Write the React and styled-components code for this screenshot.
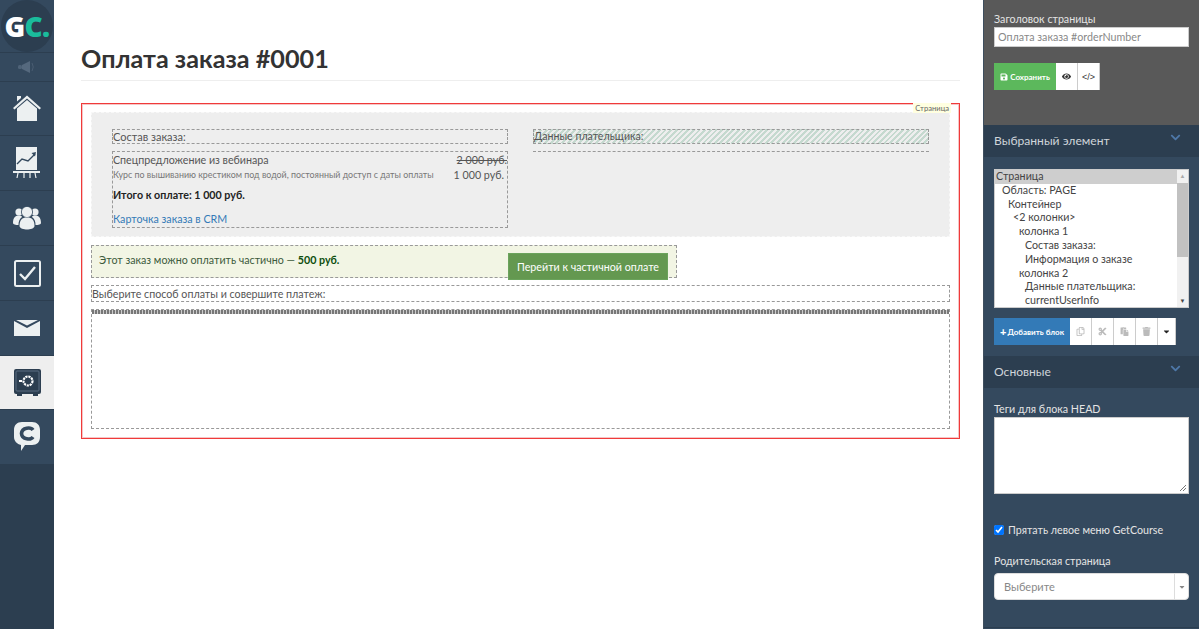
import React from 'react';
import styled, { createGlobalStyle } from 'styled-components';
import { FaEye, FaSave, FaCut, FaPaste, FaTrash, FaRegCopy, FaCaretDown, FaChevronDown } from 'react-icons/fa';

const Global = createGlobalStyle`
  html, body { margin: 0; padding: 0; height: 100%; }
  body { font-family: "Lato", "Liberation Sans", sans-serif; background: #fff; overflow: hidden; }
  * { box-sizing: border-box; }
`;

const Layout = styled.div`
  display: flex;
  width: 1199px;
  height: 629px;
`;

const Sidebar = styled.nav`
  width: 54px;
  flex: none;
  background: #2c3e50;
  display: flex;
  flex-direction: column;
`;

const Logo = styled.div`
  height: 53px;
  background: #34495e;
  border-bottom: 1px solid #2c3e50;
  overflow: hidden;
  display: flex;
  align-items: center;
  justify-content: center;
`;

const LogoCircle = styled.div`
  width: 52px;
  height: 52px;
  flex: none;
  border-radius: 50%;
  background: #2c3e50;
  display: flex;
  align-items: center;
  justify-content: center;
  font-family: "Open Sans", sans-serif;
  font-weight: 800;
  font-size: 28px;
  letter-spacing: -0.6px;
  color: #fff;
  span { color: #1abc9c; }
`;

const Speaker = styled.div`
  height: 29px;
  background: #34495e;
  border-bottom: 1px solid #2c3e50;
  display: flex;
  align-items: center;
  justify-content: center;
`;

const NavItem = styled.div`
  height: ${(p) => p.$h || 55}px;
  background: ${(p) => (p.$active ? '#eeeeee' : '#34495e')};
  border-bottom: 1px solid #2c3e50;
  display: flex;
  align-items: center;
  justify-content: center;
`;

const Main = styled.main`
  flex: 1;
  min-width: 0;
  padding: 43px 23px 0 27px;
`;

const Title = styled.h1`
  margin: 0;
  height: 38px;
  border-bottom: 1px solid #eee;
  font-size: 25.2px;
  line-height: 30px;
  font-weight: 700;
  color: #333;
`;

const PageFrame = styled.div`
  position: relative;
  margin-top: 22px;
  height: 336px;
  border: 1px solid #f03a3a;
  box-shadow: inset 0 0 0 1px #f6c6c6;
  padding: 8px 9px;
  font-size: 10.7px;
  color: #555;
`;

const FrameTag = styled.div`
  position: absolute;
  top: -1px;
  right: 8px;
  height: 10px;
  padding: 0 2px;
  background: #ffffe0;
  color: #666;
  font-size: 7.6px;
  line-height: 11px;
`;

const OrderBand = styled.div`
  background: #eeeeee;
  outline: 1px dashed #f8f8f8;
  outline-offset: -1px;
  height: 125px;
  padding: 17px 21px 0;
  display: flex;
  gap: 25px;
`;

const Col = styled.div`
  width: ${(p) => p.$w}px;
  flex: none;
`;

const Dashed = styled.div`
  border: 1px dashed #999;
`;

const Heading = styled(Dashed)`
  height: 15px;
  line-height: 13px;
  font-size: 11px;
  color: #555;
  margin-bottom: 7px;
`;

const HatchHeading = styled(Heading)`
  font-size: 10.6px;
  background: repeating-linear-gradient(135deg, #c5d9cf 0 2px, #eee 2px 4px);
`;

const OrderInfo = styled(Dashed)`
  height: 77px;
  padding-top: 1px;
`;

const EmptyInfo = styled.div`
  border-top: 1px dashed #999;
`;

const ItemRow = styled.div`
  display: flex;
  justify-content: space-between;
  align-items: center;
  white-space: nowrap;
`;

const ItemName = styled.div`
  line-height: 14px;
  color: #555;
`;

const OldPrice = styled.div`
  line-height: 14px;
  text-decoration: line-through;
  color: #555;
`;

const ItemDesc = styled.div`
  font-size: 8.9px;
  line-height: 15px;
  color: #777;
`;

const NewPrice = styled.div`
  line-height: 15px;
  color: #555;
  padding-right: 3px;
`;

const Total = styled.div`
  font-weight: 700;
  color: #222;
  line-height: 14px;
  margin-top: 6px;
`;

const CrmLink = styled.a`
  display: block;
  line-height: 14px;
  margin-top: 10px;
  color: #337ab7;
`;

const PartialPay = styled(Dashed)`
  margin-top: 8px;
  width: 586px;
  height: 33px;
  background: #f2f5e4;
  display: flex;
  justify-content: space-between;
  padding: 0 8px 0 7px;
  color: #3c5a3c;
`;

const PartialText = styled.div`
  line-height: 27px;
  b { color: #0d4d0d; }
`;

const PartialButton = styled.button`
  margin-top: 7px;
  width: 160px;
  height: 27px;
  flex: none;
  white-space: nowrap;
  padding: 0;
  border: 1px solid #6ba35c;
  background: #649850;
  color: #fff;
  font: inherit;
`;

const MethodTitle = styled(Dashed)`
  margin-top: 7px;
  height: 17px;
  line-height: 15px;
  color: #555;
`;

const WidgetArea = styled(Dashed)`
  margin-top: 7px;
  height: 120px;
`;

const WidgetStrip = styled.div`
  height: 4px;
  background: repeating-linear-gradient(90deg, #777 0 2px, #ccc 2px 3px);
`;

const Panel = styled.aside`
  width: 216px;
  flex: none;
  background: #34495e;
  display: flex;
  flex-direction: column;
  border-left: 1px solid #3e4e5e;
  font-size: 10.7px;
`;

const PanelTop = styled.div`
  background: #595959;
  height: 125px;
  padding: 12px 10px 0;
`;

const Label = styled.div`
  line-height: 14px;
  color: #e4e4e4;
  margin-top: ${(p) => p.$top || 0}px;
  margin-bottom: 1px;
`;

const TextInput = styled.div`
  width: 195px;
  height: 20px;
  background: #fff;
  border: 1px solid #ccc;
  color: #888;
  line-height: 18px;
  padding-left: 3px;
`;

const Toolbar = styled.div`
  display: flex;
  margin-top: ${(p) => p.$top || 0}px;
`;

const ToolMain = styled.button`
  height: 27px;
  width: ${(p) => p.$w}px;
  flex: none;
  border: none;
  padding: 0;
  background: ${(p) => p.$bg};
  color: #fff;
  font: inherit;
  font-size: 8px;
  font-weight: 700;
  white-space: nowrap;
  display: flex;
  align-items: center;
  justify-content: center;
  gap: 1px;
  svg { margin-right: 1px; }
  b { font-size: 11px; }
`;

const ToolButton = styled.button`
  height: 27px;
  width: ${(p) => p.$w || 22}px;
  flex: none;
  border: none;
  border-right: 1px solid #ccc;
  padding: 0;
  background: #fff;
  color: ${(p) => p.$color || '#bbb'};
  font-size: 9px;
  display: flex;
  align-items: center;
  justify-content: center;
`;

const SectionHead = styled.div`
  height: 32px;
  flex: none;
  background: #2c3e50;
  padding: 0 10px 2px;
  display: flex;
  align-items: center;
  justify-content: space-between;
  color: #d0d5da;
  font-size: 12.1px;
  svg { color: #4e78a8; margin-right: 8px; margin-top: -5px; }
`;

const SectionBody = styled.div`
  padding: ${(p) => p.$pad};
  height: ${(p) => p.$h}px;
  flex: none;
`;

const TreeBox = styled.div`
  position: relative;
  width: 195px;
  height: 139px;
  background: #fff;
  border: 1px solid #ccc;
  overflow: hidden;
`;

const TreeRow = styled.div`
  height: 13.8px;
  line-height: 12px;
  color: #444;
  padding-left: ${(p) => p.$indent}px;
  background: ${(p) => (p.$selected ? '#cecece' : 'transparent')};
`;

const Scrollbar = styled.div`
  position: absolute;
  top: 0;
  right: 0;
  bottom: 0;
  width: 11px;
  background: #f1f1f1;
  color: #444;
  font-size: 6px;
  text-align: center;
`;

const ScrollThumb = styled.div`
  position: absolute;
  top: 13px;
  left: 0;
  right: 0;
  height: 74px;
  background: #c1c1c1;
`;

const ScrollArrow = styled.div`
  position: absolute;
  left: 0;
  right: 0;
  line-height: 12px;
  ${(p) => (p.$bottom ? 'bottom: 0;' : 'top: 0; color: #aaa;')}
`;

const TextArea = styled.div`
  position: relative;
  width: 195px;
  height: 77px;
  background: #fff;
  border: 1px solid #ccc;
`;

const Grip = styled.svg`
  position: absolute;
  right: 1px;
  bottom: 1px;
`;

const CheckRow = styled.label`
  display: flex;
  align-items: center;
  gap: 4px;
  margin-top: 29px;
  color: #e4e4e4;
  line-height: 14px;
  input { margin: 0; width: 10px; height: 10px; accent-color: #0075ff; }
`;

const SelectBox = styled.div`
  width: 195px;
  height: 27px;
  margin-top: 5px;
  background: #fff;
  border-radius: 4px;
  border: 1px solid #ddd;
  display: flex;
  color: #888;
  font-size: 11px;
`;

const SelectText = styled.div`
  flex: 1;
  line-height: 25px;
  padding-left: 9px;
`;

const SelectCaret = styled.div`
  width: 14px;
  border-left: 1px solid #ddd;
  display: flex;
  align-items: center;
  justify-content: center;
  font-size: 8px;
  color: #888;
`;

const PanelFoot = styled.div`
  flex: 1;
  border-top: 1px solid #2c3e50;
`;

const treeRows = [
  ['Страница', 1, true],
  ['Область: PAGE', 7],
  ['Контейнер', 13],
  ['<2 колонки>', 18],
  ['колонка 1', 24],
  ['Состав заказа:', 30],
  ['Информация о заказе', 30],
  ['колонка 2', 24],
  ['Данные плательщика:', 30],
  ['currentUserInfo', 30],
];

const SpeakerIcon = () => (
  <svg width="18" height="12" viewBox="0 0 18 12">
    <rect x="0" y="4" width="4" height="4" rx="1.5" fill="#4f6378" />
    <path d="M4 4 L12 0 V12 L4 8 Z" fill="#55697e" />
    <path d="M14 2 Q16.5 6 14 10" stroke="#4a5d72" strokeWidth="1" fill="none" />
  </svg>
);

const HomeIcon = () => (
  <svg width="28" height="27" viewBox="0 0 28 27">
    <path d="M4 1 H8 V3 L4 6.5 Z" fill="#ecf0f1" />
    <path d="M0 13 L14 0.5 L28 13 L26.5 14.5 L14 3.5 L1.5 14.5 Z" fill="#ecf0f1" />
    <path d="M4 13.5 L14 5 L24 13.5 V26 H4 Z" fill="#ecf0f1" />
  </svg>
);

const ChartIcon = () => (
  <svg width="28" height="32" viewBox="0 0 28 32">
    <rect x="3" y="0" width="21" height="23" fill="#ecf0f1" />
    <path d="M4 17 L9 12 L15 14 L22 7" stroke="#34495e" strokeWidth="1.4" fill="none" />
    <path d="M23 5 L18.5 6 L22 9.5 Z" fill="#34495e" />
    <rect x="0" y="24" width="27" height="2" fill="#ecf0f1" />
    <path d="M5 26 L4 31 M11 26 L11 31 M17 26 L17 31 M22 26 L23 31" stroke="#ecf0f1" strokeWidth="1.2" />
  </svg>
);

const UsersIcon = () => (
  <svg width="28" height="24" viewBox="0 0 28 24">
    <circle cx="6" cy="6" r="3.6" fill="#ecf0f1" />
    <circle cx="22" cy="6" r="3.6" fill="#ecf0f1" />
    <path d="M0 17 C0 11 3 9.5 6 9.5 C7.5 9.5 9 10 9 11 C6 13 5.5 16 5.5 19 C2.5 19 0 18.5 0 17 Z" fill="#ecf0f1" />
    <path d="M28 17 C28 11 25 9.5 22 9.5 C20.5 9.5 19 10 19 11 C22 13 22.5 16 22.5 19 C25.5 19 28 18.5 28 17 Z" fill="#ecf0f1" />
    <circle cx="14" cy="6" r="5.6" fill="#ecf0f1" stroke="#34495e" strokeWidth="0.8" />
    <path d="M6.5 20 C6.5 14 9 11.5 14 11.5 C19 11.5 21.5 14 21.5 20 C21.5 22.5 17 23.5 14 23.5 C11 23.5 6.5 22.5 6.5 20 Z" fill="#ecf0f1" />
  </svg>
);

const CheckIcon = () => (
  <svg width="27" height="27" viewBox="0 0 27 27">
    <rect x="1" y="1" width="25" height="25" rx="1.5" fill="none" stroke="#ecf0f1" strokeWidth="2" />
    <path d="M6 14 L11 19 L21 7" stroke="#ecf0f1" strokeWidth="2.4" fill="none" />
  </svg>
);

const MailIcon = () => (
  <svg width="26" height="16" viewBox="0 0 26 16">
    <path d="M0 1 L13 8 L26 1 V16 H0 Z" fill="#ecf0f1" />
    <path d="M2 0 H24 L13 5.5 Z" fill="#ecf0f1" />
  </svg>
);

const SafeIcon = () => (
  <svg width="27" height="27" viewBox="0 0 27 27">
    <rect x="0" y="0" width="27" height="25" rx="2" fill="#2c3e50" />
    <rect x="2" y="2" width="23" height="20" rx="1" fill="none" stroke="#5a6d81" strokeWidth="1" />
    <rect x="3" y="25" width="5" height="2" fill="#2c3e50" />
    <rect x="19" y="25" width="5" height="2" fill="#2c3e50" />
    <circle cx="14" cy="12" r="4.5" fill="none" stroke="#fff" strokeWidth="2.2" strokeDasharray="2.2 0.8" />
    <rect x="5" y="11" width="3" height="2" fill="#fff" />
  </svg>
);

const ChatIcon = () => (
  <svg width="26" height="30" viewBox="0 0 26 30">
    <path d="M8 0 H18 C23 0 26 3 26 8 V15 C26 20 23 23 18 23 H11 L7 29 V23 C3 22 0 19 0 15 V8 C0 3 3 0 8 0 Z" fill="#ecf0f1" />
    <path d="M19 8 C17 5 8 5 7.5 11.5 C8 18 17 18 19 15" stroke="#34495e" strokeWidth="3.6" fill="none" />
  </svg>
);

const App = () => (
  <Layout>
    <Global />
    <Sidebar>
      <Logo>
        <LogoCircle>G<span>C.</span></LogoCircle>
      </Logo>
      <Speaker><SpeakerIcon /></Speaker>
      <NavItem $h={54}><HomeIcon /></NavItem>
      <NavItem><ChartIcon /></NavItem>
      <NavItem><UsersIcon /></NavItem>
      <NavItem><CheckIcon /></NavItem>
      <NavItem><MailIcon /></NavItem>
      <NavItem $active $h={54}><SafeIcon /></NavItem>
      <NavItem><ChatIcon /></NavItem>
    </Sidebar>

    <Main>
      <Title>Оплата заказа #0001</Title>
      <PageFrame>
        <FrameTag>Страница</FrameTag>
        <OrderBand>
          <Col $w={396}>
            <Heading>Состав заказа:</Heading>
            <OrderInfo>
              <ItemRow>
                <ItemName>Спецпредложение из вебинара</ItemName>
                <OldPrice>2 000 руб.</OldPrice>
              </ItemRow>
              <ItemRow>
                <ItemDesc>Курс по вышиванию крестиком под водой, постоянный доступ с даты оплаты</ItemDesc>
                <NewPrice>1 000 руб.</NewPrice>
              </ItemRow>
              <Total>Итого к оплате: 1 000 руб.</Total>
              <CrmLink>Карточка заказа в CRM</CrmLink>
            </OrderInfo>
          </Col>
          <Col $w={396}>
            <HatchHeading>Данные плательщика:</HatchHeading>
            <EmptyInfo />
          </Col>
        </OrderBand>
        <PartialPay>
          <PartialText>Этот заказ можно оплатить частично — <b>500 руб.</b></PartialText>
          <PartialButton>Перейти к частичной оплате</PartialButton>
        </PartialPay>
        <MethodTitle>Выберите способ оплаты и совершите платеж:</MethodTitle>
        <WidgetArea><WidgetStrip /></WidgetArea>
      </PageFrame>
    </Main>

    <Panel>
      <PanelTop>
        <Label>Заголовок страницы</Label>
        <TextInput>Оплата заказа #orderNumber</TextInput>
        <Toolbar $top={16}>
          <ToolMain $w={62} $bg="#5cb85c"><FaSave size={8} />Сохранить</ToolMain>
          <ToolButton $color="#333"><FaEye /></ToolButton>
          <ToolButton $color="#333">{'</>'}</ToolButton>
        </Toolbar>
      </PanelTop>
      <SectionHead>Выбранный элемент<FaChevronDown size={11} /></SectionHead>
      <SectionBody $pad="12px 10px 0" $h={199}>
        <TreeBox>
          {treeRows.map(([text, indent, selected]) => (
            <TreeRow key={text} $indent={indent} $selected={selected}>{text}</TreeRow>
          ))}
          <Scrollbar>
            <ScrollArrow>▲</ScrollArrow>
            <ScrollThumb />
            <ScrollArrow $bottom>▼</ScrollArrow>
          </Scrollbar>
        </TreeBox>
        <Toolbar $top={10}>
          <ToolMain $w={76} $bg="#337ab7"><b>+</b>Добавить блок</ToolMain>
          <ToolButton><FaRegCopy /></ToolButton>
          <ToolButton><FaCut /></ToolButton>
          <ToolButton><FaPaste /></ToolButton>
          <ToolButton><FaTrash /></ToolButton>
          <ToolButton $color="#222" $w={18}><FaCaretDown /></ToolButton>
        </Toolbar>
      </SectionBody>
      <SectionHead>Основные<FaChevronDown size={11} /></SectionHead>
      <SectionBody $pad="14px 10px 0" $h={239}>
        <Label>Теги для блока HEAD</Label>
        <TextArea>
          <Grip width="8" height="8" viewBox="0 0 8 8">
            <path d="M1 7 L7 1 M4 7 L7 4" stroke="#777" strokeWidth="1" />
          </Grip>
        </TextArea>
        <CheckRow><input type="checkbox" defaultChecked readOnly />Прятать левое меню GetCourse</CheckRow>
        <Label $top={17}>Родительская страница</Label>
        <SelectBox>
          <SelectText>Выберите</SelectText>
          <SelectCaret><FaCaretDown /></SelectCaret>
        </SelectBox>
      </SectionBody>
      <PanelFoot />
    </Panel>
  </Layout>
);

export default App;
